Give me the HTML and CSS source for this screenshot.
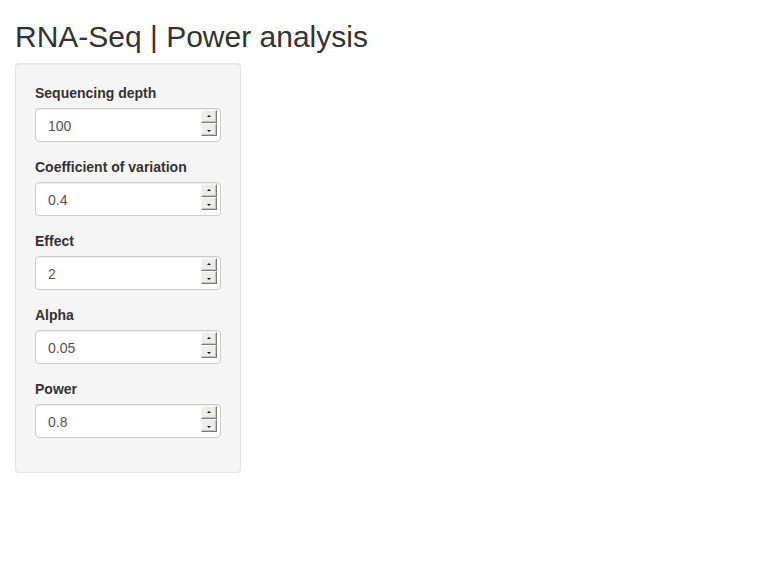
FILE: index.html
```html
<!DOCTYPE html>
<html>
<head>
<meta charset="utf-8">
<title>RNA-Seq | Power analysis</title>
<link rel="stylesheet" href="styles.css">
</head>
<body>
<div class="container">
  <h2 class="title">RNA-Seq | Power analysis</h2>
  <div class="row">
    <div class="col">
      <form class="well">
        <div class="form-group">
          <label class="label" for="depth">Sequencing depth</label>
          <div class="num">
            <input class="form-control" id="depth" type="number" value="100">
            <span class="spin"><span class="btn up"></span><span class="btn down"></span></span>
          </div>
        </div>
        <div class="form-group">
          <label class="label" for="cv">Coefficient of variation</label>
          <div class="num">
            <input class="form-control" id="cv" type="number" value="0.4" step="0.1">
            <span class="spin"><span class="btn up"></span><span class="btn down"></span></span>
          </div>
        </div>
        <div class="form-group">
          <label class="label" for="effect">Effect</label>
          <div class="num">
            <input class="form-control" id="effect" type="number" value="2">
            <span class="spin"><span class="btn up"></span><span class="btn down"></span></span>
          </div>
        </div>
        <div class="form-group">
          <label class="label" for="alpha">Alpha</label>
          <div class="num">
            <input class="form-control" id="alpha" type="number" value="0.05" step="0.01">
            <span class="spin"><span class="btn up"></span><span class="btn down"></span></span>
          </div>
        </div>
        <div class="form-group">
          <label class="label" for="power">Power</label>
          <div class="num">
            <input class="form-control" id="power" type="number" value="0.8" step="0.1">
            <span class="spin"><span class="btn up"></span><span class="btn down"></span></span>
          </div>
        </div>
      </form>
    </div>
  </div>
</div>
</body>
</html>
```
FILE: styles.css
```css
* { box-sizing: border-box; }
html, body {
  margin: 0;
  padding: 0;
  background: #fff;
}
body {
  font-family: "Liberation Sans", Arial, sans-serif;
  font-size: 14px;
  line-height: 1.42857143;
  color: #333;
}
.container {
  padding: 0 15px;
}
.title {
  font-size: 30px;
  font-weight: 500;
  line-height: 1.1;
  margin: 20px 0 10px;
  color: #333;
}
.row {
  display: flex;
}
.col {
  width: 226px;
}
.well {
  margin: 0 0 20px;
  padding: 19px;
  background: #f5f5f5;
  border: 1px solid #e3e3e3;
  border-radius: 4px;
  box-shadow: inset 0 1px 1px rgba(0,0,0,.05);
}
.form-group {
  margin-bottom: 15px;
}
.label {
  display: inline-block;
  margin-bottom: 5px;
  font-weight: bold;
  max-width: 100%;
}
.num {
  position: relative;
}
.form-control {
  display: block;
  width: 100%;
  height: 34px;
  padding: 7px 12px 5px;
  font-family: "Liberation Sans", Arial, sans-serif;
  font-size: 14px;
  line-height: 1.42857143;
  color: #555;
  background: #fff;
  border: 1px solid #ccc;
  border-radius: 4px;
  box-shadow: inset 0 1px 1px rgba(0,0,0,.075);
  margin: 0;
  -moz-appearance: textfield;
}
.form-control::-webkit-inner-spin-button,
.form-control::-webkit-outer-spin-button {
  -webkit-appearance: none;
  margin: 0;
}
.spin {
  position: absolute;
  top: 2px;
  right: 4px;
  width: 16px;
  height: 26px;
  display: flex;
  flex-direction: column;
  pointer-events: none;
}
.btn {
  flex: 1;
  position: relative;
  background: #ececea;
  border: 1px solid;
  border-color: #fafafa #7a7a7a #7a7a7a #fafafa;
  box-shadow: inset -1px -1px 0 #c4c4c4;
}
.btn::after {
  content: "";
  position: absolute;
  left: 50%;
  top: 50%;
  margin-left: -2px;
  width: 0;
  height: 0;
  border-left: 2px solid transparent;
  border-right: 2px solid transparent;
}
.up::after {
  margin-top: -2px;
  border-bottom: 2px solid #111;
}
.down::after {
  margin-top: 0;
  border-top: 2px solid #111;
}
```
